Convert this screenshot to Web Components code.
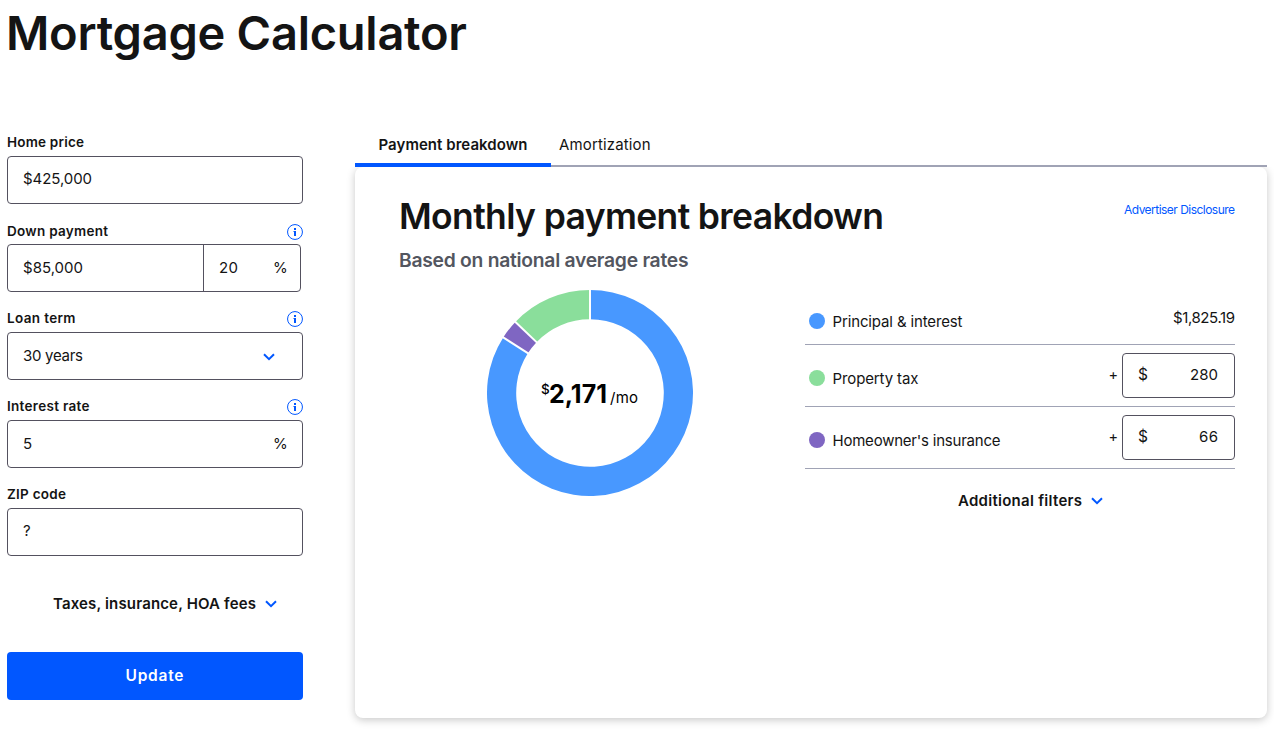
<!DOCTYPE html>
<html lang="en">
<head>
<meta charset="utf-8">
<title>Mortgage Calculator</title>
<style>
body{margin:0;background:#fff;color:#141414;font-family:Inter,"Liberation Sans",sans-serif;font-size:15px}
</style>
</head>
<body>
<mortgage-page></mortgage-page>
<script>
const define = (name, html, setup) => {
  const template = document.createElement('template');
  template.innerHTML = html;
  customElements.define(name, class extends HTMLElement {
    constructor() {
      super();
      this.attachShadow({ mode: 'open' }).append(template.content.cloneNode(true));
    }
    connectedCallback() { if (setup) setup(this, this.shadowRoot); }
  });
};

define('mortgage-page', `
<style>
:host{display:block;height:738px;overflow:hidden;padding:0 7px;box-sizing:border-box}
h1{margin:0;font-size:47px;font-weight:600;line-height:65px;height:132px;box-sizing:border-box}
main{display:grid;grid-template-columns:296px 912px;column-gap:52px}
</style>
<h1><track-text w="461" style="margin-left:-1px">Mortgage Calculator</track-text></h1>
<main><loan-form></loan-form><breakdown-panel></breakdown-panel></main>`);

define('loan-form', `
<style>
:host{display:flex;flex-direction:column;gap:16px}
.pair{width:294px}
.toggle{flex:none;display:flex;align-items:center;height:24px;margin:20px 0 16px 46px;gap:9px;font-weight:600}
.toggle track-text{margin-top:-1px}
button{flex:none;border:0;border-radius:4px;background:#0157ff;color:#fff;height:48px;margin-top:4px;padding:0 1px 1px 0;font:600 15.5px/47px Inter,"Liberation Sans",sans-serif;text-align:center}
</style>
<form-field><track-text slot="label" w="77">Home price</track-text>
  <value-box style="--up:2px"><track-text w="69">$425,000</track-text></value-box></form-field>
<form-field style="--label:22px"><track-text slot="label" w="101">Down payment</track-text><info-icon slot="info" style="margin-top:4px"></info-icon>
  <value-box split class="pair"><track-text w="60">$85,000</track-text><track-text slot="mid" w="19">20</track-text><track-text slot="end" w="13">%</track-text></value-box></form-field>
<form-field style="--label:21px"><track-text slot="label" w="68.5">Loan term</track-text><info-icon slot="info"></info-icon>
  <value-box menu><track-text w="60">30 years</track-text><chevron-icon slot="end" style="margin-top:2px"></chevron-icon></value-box></form-field>
<form-field style="--label:21px"><track-text slot="label" w="82.5">Interest rate</track-text><info-icon slot="info"></info-icon>
  <value-box style="--up:1px"><track-text w="10">5</track-text><track-text slot="end" w="13">%</track-text></value-box></form-field>
<form-field><track-text slot="label" w="59">ZIP code</track-text>
  <value-box style="--up:2px"><track-text w="9">?</track-text></value-box></form-field>
<div class="toggle"><track-text w="203">Taxes, insurance, HOA fees</track-text><chevron-icon></chevron-icon></div>
<button><track-text w="58">Update</track-text></button>`);

define('form-field', `
<style>
:host{display:block;height:72px}
.head{display:flex;justify-content:space-between;height:24px;font-size:13.5px;font-weight:600;line-height:var(--label,20px)}
::slotted(info-icon){margin-top:3px}
</style>
<div class="head"><slot name="label"></slot><slot name="info"></slot></div><slot></slot>`);

define('value-box', `
<style>
:host{display:flex;align-items:center;box-sizing:border-box;height:48px;border:1px solid #54515f;border-radius:4px;padding:0 16px 0 15px;line-height:46px}
:host(.pair){width:294px;padding-right:14px}
:host([menu]){padding-right:27px}
.text{flex:1;padding-bottom:var(--up,0px)}
.mid{display:none}
:host([split]) .mid{display:flex;width:71px;height:46px;align-items:center;border-left:1px solid #54515f;box-sizing:border-box;padding-left:15px}
:host([split]) .text{flex:none;width:180px}
::slotted([slot=end]){margin-left:auto}
</style>
<div class="text"><slot></slot></div><div class="mid"><slot name="mid"></slot></div><slot name="end"></slot>`);

define('info-icon', `
<style>:host{display:block;width:16px;height:16px}svg{display:block}</style>
<svg width="16" height="16" viewBox="0 0 16 16"><circle cx="8" cy="8" r="7.45" fill="none" stroke="#0157ff" stroke-width="1"/><path d="M7 4h2v2H7zM6.5 7H9v5H7V8h-.5z" fill="#0157ff"/></svg>`);

define('chevron-icon', `
<style>:host{display:block;width:12px;height:8px;flex:none}svg{display:block}</style>
<svg width="12" height="8" viewBox="0 0 12 8"><path d="M1 1.3 6 6.2 11 1.3" fill="none" stroke="#0157ff" stroke-width="2"/></svg>`);

define('breakdown-panel', `
<style>
:host{display:block}
nav{display:flex;height:35px;box-sizing:border-box;box-shadow:inset 0 -2px #a0a3b5;line-height:26px}
nav .on{width:196px;box-sizing:border-box;border-bottom:4px solid #0157ff;padding-left:23.5px;font-weight:600}
nav .off{padding-left:8px}
section{height:551px;box-sizing:border-box;border-radius:8px;background:#fff;box-shadow:0 2px 8px rgba(0,0,0,.22);padding:26px 32px 0 44px}
.clip{overflow:hidden;margin:0 -20px -20px;padding:0 20px 20px}
header{display:flex;justify-content:space-between}
h2{margin:0;font-size:35.5px;font-weight:600;line-height:48px;height:48px}
h3{margin:0;font-size:19.3px;font-weight:600;line-height:30px;height:30px;color:#53565f;padding-top:4px}
a{color:#0157ff;font-size:12px;line-height:33px}
.body{display:grid;grid-template-columns:206px 430px;column-gap:112px;padding-left:88px;margin-top:15px}
.filters{display:flex;align-items:center;gap:9px;font-weight:600;line-height:24px;margin:20px 0 0 153px}
</style>
<nav><div class="on"><track-text w="149">Payment breakdown</track-text></div><div class="off"><track-text w="91.5">Amortization</track-text></div></nav>
<div class="clip"><section>
<header><h2><track-text w="485">Monthly payment breakdown</track-text></h2><a><track-text w="111">Advertiser Disclosure</track-text></a></header>
<h3><track-text w="289.5">Based on national average rates</track-text></h3>
<div class="body"><payment-donut></payment-donut>
<div>
<cost-row color="#4898ff" style="height:55px"><track-text w="130">Principal &amp; interest</track-text><track-text slot="amount" w="62">$1,825.19</track-text></cost-row>
<cost-row editable color="#8ade9b"><track-text w="86">Property tax</track-text><track-text slot="amount" w="28">280</track-text></cost-row>
<cost-row editable color="#7f66c2"><track-text w="168">Homeowner's insurance</track-text><track-text slot="amount" w="19">66</track-text></cost-row>
<div class="filters"><track-text w="124">Additional filters</track-text><chevron-icon></chevron-icon></div>
</div></div>
</section></div>`);

define('cost-row', `
<style>
:host{display:flex;box-sizing:border-box;height:62px;border-bottom:1px solid #a0a3b5;padding-left:4px}
i{width:16px;height:16px;border-radius:50%;margin:23px 7.5px 0 0}
.name{line-height:20px;padding-top:22px}
.amount{margin-left:auto;display:flex;line-height:20px;padding-top:18px}
.plus,.dollar{display:none}
:host([editable]) i{margin-top:25px}
:host([editable]) .name{padding-top:24px}
:host([editable]) .amount{padding-top:8px;line-height:42px}
:host([editable]) .plus{display:block;margin-right:4px;line-height:43px;font-size:14.5px}
:host([editable]) .dollar{display:block;font-size:15.5px;line-height:41px}
:host([editable]) .box{display:flex;justify-content:space-between;width:113px;height:45px;box-sizing:border-box;border:1px solid #54515f;border-radius:4px;padding:0 16px 0 15px}
</style>
<i></i><div class="name"><slot></slot></div>
<div class="amount"><span class="plus">+</span><div class="box"><span class="dollar">$</span><slot name="amount"></slot></div></div>`,
(host, root) => { root.querySelector('i').style.background = host.getAttribute('color'); });

define('payment-donut', `
<style>
:host{display:grid;width:206px;height:206px}
svg,.total{grid-area:1/1}
.total{display:flex;align-items:flex-start;padding:87px 0 0 54px;color:#000;line-height:34px}
sup{font-size:13.5px;font-weight:500;line-height:24px;width:8px}
b{font-size:25px;font-weight:700;margin-right:3px}
span{line-height:41px}
</style>
<svg width="206" height="206" viewBox="-103 -103 206 206"></svg>
<div class="total"><sup>$</sup><b><track-text w="58">2,171</track-text></b><span><track-text w="28">/mo</track-text></span></div>`,
(host, root) => {
  const parts = [[1825.19, '#4898ff'], [66, '#7f66c2'], [280, '#8ade9b']];
  const sum = parts.reduce((s, p) => s + p[0], 0);
  const at = (r, a) => (r * Math.sin(a)).toFixed(3) + ' ' + (-r * Math.cos(a)).toFixed(3);
  let a = 0, out = '', lines = '';
  for (const [value, color] of parts) {
    const e = a + value / sum * 2 * Math.PI, big = e - a > Math.PI ? 1 : 0;
    out += `<path fill="${color}" d="M${at(103, a)}A103 103 0 ${big} 1 ${at(103, e)}L${at(73.8, e)}A73.8 73.8 0 ${big} 0 ${at(73.8, a)}Z"/>`;
    lines += `<path stroke="#fff" stroke-width="2" d="M${at(72, a)}L${at(104, a)}"/>`;
    a = e;
  }
  root.querySelector('svg').innerHTML = out + lines;
});

define('track-text', `
<style>:host{display:inline-block;white-space:nowrap;text-align:left}span{display:inline-block}</style><span><slot></slot></span>`,
(host, root) => {
  const w = +host.getAttribute('w'), n = host.textContent.length;
  const natural = root.querySelector('span').getBoundingClientRect().width;
  if (n > 1) host.style.letterSpacing = (w - natural) / (n - 1) + 'px';
  host.style.width = w + 'px';
});
</script>
</body>
</html>
